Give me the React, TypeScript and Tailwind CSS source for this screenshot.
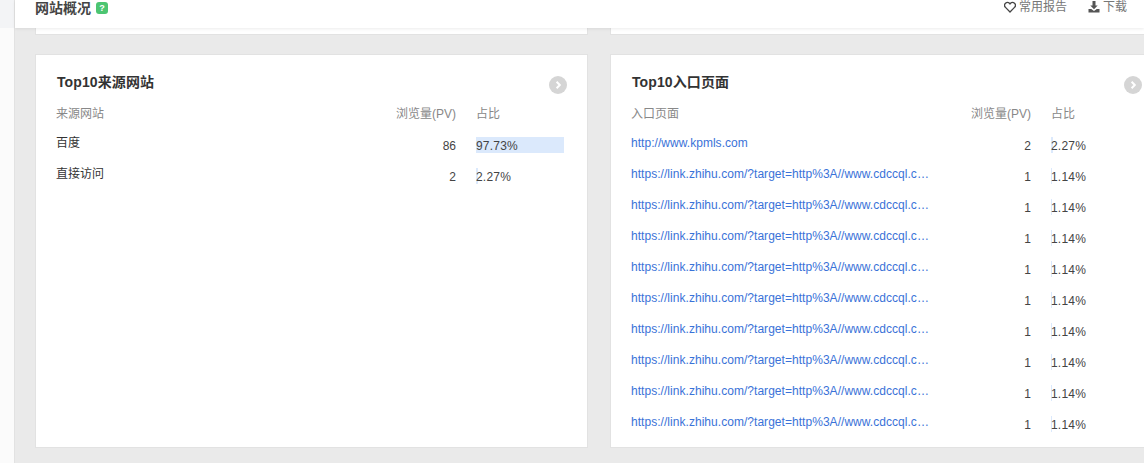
import React from "react";

const font = { fontFamily: '"Liberation Sans", "Noto Sans CJK SC", sans-serif' };

type Row = { label: string; link?: boolean; pv: number; pct: string; w: number };

const leftRows: Row[] = [
  { label: "百度", pv: 86, pct: "97.73%", w: 88 },
  { label: "直接访问", pv: 2, pct: "2.27%", w: 2 },
];

const long = "https://link.zhihu.com/?target=http%3A//www.cdccql.c…";
const rightRows: Row[] = [
  { label: "http://www.kpmls.com", link: true, pv: 2, pct: "2.27%", w: 2 },
  ...Array.from({ length: 9 }, () => ({ label: long, link: true, pv: 1, pct: "1.14%", w: 1 })),
];

function Card({ title, head, rows }: { title: string; head: string; rows: Row[] }) {
  return (
    <section className="relative h-[394px] w-[553px] shrink-0 border border-[#e2e2e2] bg-white">
      <div className="flex h-[51px] items-start pl-[21px] pr-[20px] pt-[18px]">
        <h2 className="text-[14px] leading-[18px] font-bold tracking-[0.1px] text-[#333]">{title}</h2>
        <span className="ml-auto mt-[3px] flex h-[18px] w-[18px] items-center justify-center rounded-full bg-[#d5d5d5]">
          <svg width="10" height="10" viewBox="0 0 10 10" fill="none">
            <path d="M3.6 1.8 6.8 5 3.6 8.2" stroke="#fff" strokeWidth="2" />
          </svg>
        </span>
      </div>
      <div className="flex h-[17px] items-center pl-[20px] text-[12px] leading-[17px] text-[#888]">
        <span className="w-[340px]">{head}</span>
        <span className="w-[60px] text-right whitespace-nowrap">浏览量(PV)</span>
        <span className="ml-[20px]">占比</span>
      </div>
      <div className="mt-[7px] flex flex-col">
        {rows.map((r, i) => (
          <div key={i} className="flex h-[31px] items-center pl-[20px] text-[12px] leading-[16px] text-[#444]">
            <span className={`w-[300px] whitespace-nowrap tracking-[0.04px] ${i === 0 ? "pb-[5px]" : "pb-[6px]"} ${r.link ? "text-[#3a72d8]" : "text-[#333]"}`}>
              {r.label}
            </span>
            <span className="w-[100px] text-right">{r.pv}</span>
            <span className="relative ml-[20px] h-[16px] w-[88px] -translate-y-px">
              <span className="absolute inset-y-0 left-0 bg-[#dbe9fc]" style={{ width: r.w }} />
              <span className="relative top-px tracking-[0.2px]">{r.pct}</span>
            </span>
          </div>
        ))}
      </div>
    </section>
  );
}

export default function App() {
  return (
    <div className="flex h-[463px] w-[1144px] overflow-hidden bg-[#eaeaea]" style={font}>
      <aside className="w-[15px] shrink-0 border-r border-[#e2e2e2] bg-[#fbfbfb]">
        <div className="h-[28px] bg-[#f3f4f6]" />
      </aside>
      <main className="flex min-w-0 flex-1 flex-col">
        <header className="relative z-10 flex h-[28px] shrink-0 items-start bg-white pl-[20px] pr-[17px] shadow-[0_1px_3px_rgba(0,0,0,0.08)]">
          <h1 className="text-[14px] leading-[16px] font-bold text-[#444]">网站概况</h1>
          <span className="ml-[5px] mt-[2px] flex h-[12px] w-[12px] items-center justify-center rounded-[3px] bg-[#4cc572] text-[9px] leading-none font-bold text-white">?</span>
          <div className="ml-auto flex items-center text-[12px] leading-[14px] text-[#777]">
            <svg width="12" height="12" viewBox="0 0 12 12" fill="none" className="mr-[3px]">
              <path d="M6 11 1.5 6.4a2.9 2.9 0 0 1 0-4.1 2.9 2.9 0 0 1 4 0l.5.6.5-.6a2.9 2.9 0 0 1 4 0 2.9 2.9 0 0 1 0 4.1Z" stroke="#444" strokeWidth="1.3" />
            </svg>
            <span>常用报告</span>
            <svg width="12" height="12" viewBox="0 0 12 12" className="ml-[21px] mr-[3px]">
              <path d="M4.5 0h3v4.5h2.2L6 8.2 2.3 4.5h2.2Z" fill="#555" />
              <path d="M0.5 8h2.8L6 10l2.7-2h2.8v3.5H.5Z" fill="#555" />
            </svg>
            <span>下载</span>
          </div>
        </header>
        <div className="flex gap-[22px] pl-[20px]">
          <div className="h-[7px] w-[553px] shrink-0 border border-t-0 border-[#e2e2e2] bg-white" />
          <div className="h-[7px] w-[553px] shrink-0 border border-t-0 border-[#e2e2e2] bg-white" />
        </div>
        <div className="mt-[19px] flex gap-[22px] pl-[20px]">
          <Card title="Top10来源网站" head="来源网站" rows={leftRows} />
          <Card title="Top10入口页面" head="入口页面" rows={rightRows} />
        </div>
      </main>
    </div>
  );
}
